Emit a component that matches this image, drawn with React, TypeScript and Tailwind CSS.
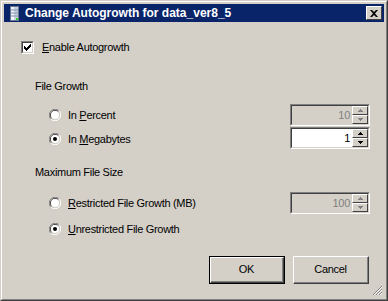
import React from "react";

const font = { fontFamily: '"Liberation Sans", Arial, sans-serif' };

function Radio({ checked }: { checked?: boolean }) {
  return (
    <svg width="12" height="12" viewBox="0 0 12 12" className="shrink-0">
      <path d="M10.5 2 A5.5 5.5 0 0 0 2 10.5" fill="none" stroke="#808080" strokeWidth="1" />
      <path d="M9.5 2.8 A4.5 4.5 0 0 0 2.8 9.5" fill="none" stroke="#404040" strokeWidth="1" />
      <path d="M1.5 10 A5.5 5.5 0 0 0 10 1.5" fill="none" stroke="#ffffff" strokeWidth="1" />
      <path d="M2.5 9.2 A4.5 4.5 0 0 0 9.2 2.5" fill="none" stroke="#d4d0c8" strokeWidth="1" />
      <circle cx="6" cy="6" r="4" fill="#ffffff" />
      {checked && <circle cx="6" cy="6" r="2" fill="#000" />}
    </svg>
  );
}

function Checkbox() {
  return (
    <div className="w-[13px] h-[13px] border-t border-l border-t-[#808080] border-l-[#808080] border-r border-b border-r-white border-b-white shrink-0">
      <div className="w-full h-full border-t border-l border-t-[#404040] border-l-[#404040] border-r border-b border-r-[#d4d0c8] border-b-[#d4d0c8] bg-white flex items-center justify-center">
        <svg width="7" height="7" viewBox="0 0 7 7">
          <path d="M0 2h1v1h1v1h1v-1h1v-1h1v-1h1v-1h1v3h-1v1h-1v1h-1v1h-1v1h-1v-1h-1v-1h-1v-1h-1z" fill="#000" />
        </svg>
      </div>
    </div>
  );
}

function SpinBtn({ up, disabled }: { up?: boolean; disabled?: boolean }) {
  const c = disabled ? "#808080" : "#000";
  return (
    <div className="flex-1 bg-[#d4d0c8] border-t border-l border-t-white border-l-white border-r border-b border-r-[#404040] border-b-[#404040] flex items-center justify-center">
      <svg width="5" height="3" viewBox="0 0 5 3">
        {up ? (
          <path d="M2 0h1v1h1v1h1v1h-5v-1h1v-1h1z" fill={c} />
        ) : (
          <path d="M0 0h5v1h-1v1h-1v1h-1v-1h-1v-1h-1z" fill={c} />
        )}
      </svg>
    </div>
  );
}

function Spinner({ value, disabled }: { value: string; disabled?: boolean }) {
  return (
    <div className="w-[80px] h-[22px] border-t border-l border-t-[#808080] border-l-[#808080] border-r border-b border-r-white border-b-white shrink-0">
      <div
        className={`w-full h-full border-t border-l border-t-[#404040] border-l-[#404040] border-r border-b border-r-[#d4d0c8] border-b-[#d4d0c8] flex ${
          disabled ? "bg-[#d4d0c8]" : "bg-white"
        }`}
      >
        <div
          className={`flex-1 flex items-center justify-end pr-[2px] text-[11px] ${
            disabled ? "text-[#808080]" : "text-black"
          }`}
        >
          {value}
        </div>
        <div className="w-[16px] flex flex-col">
          <SpinBtn up disabled={disabled} />
          <SpinBtn disabled={disabled} />
        </div>
      </div>
    </div>
  );
}

function Button({ children, def }: { children: React.ReactNode; def?: boolean }) {
  return (
    <div className={`w-[76px] h-[28px] ${def ? "border border-black" : ""}`}>
      <div className="w-full h-full border-t border-l border-t-white border-l-white border-r border-b border-r-[#404040] border-b-[#404040]">
        <div className="w-full h-full border-r border-b border-r-[#808080] border-b-[#808080] flex items-center justify-center text-[11px] text-black">
          {children}
        </div>
      </div>
    </div>
  );
}

function RadioRow({ checked, children }: { checked?: boolean; children: React.ReactNode }) {
  return (
    <div className="flex items-center gap-[7px]">
      <Radio checked={checked} />
      <span>{children}</span>
    </div>
  );
}

export default function App() {
  return (
    <div className="w-[388px] h-[301px] bg-[#d4d0c8] overflow-hidden" style={font}>
      <div className="w-full h-full border-t border-l border-t-[#d4d0c8] border-l-[#d4d0c8] border-r border-b border-r-[#404040] border-b-[#404040]">
        <div className="w-full h-full border-t border-l border-t-white border-l-white border-r border-b border-r-[#808080] border-b-[#808080] p-[2px] flex flex-col">
          {/* title bar */}
          <div className="h-[18px] bg-[#0a246a] flex items-center pl-[6px] pr-[2px] shrink-0">
            <svg width="9" height="15" viewBox="0 0 9 15" className="shrink-0">
              <rect x="0.5" y="0.5" width="8" height="14" fill="#c8d0e0" stroke="#6a7890" />
              <rect x="1" y="1" width="3" height="13" fill="#f0f4ff" />
              <path d="M1 4h7M1 7h7M1 10h7" stroke="#8090a8" />
              <rect x="6" y="12" width="2" height="2" fill="#30d030" />
            </svg>
            <div className="ml-[6px] text-white font-bold text-[12px] leading-none flex-1">
              Change Autogrowth for data_ver8_5
            </div>
            <div className="w-[16px] h-[14px] bg-[#d4d0c8] border-t border-l border-t-white border-l-white border-r border-b border-r-[#404040] border-b-[#404040] flex items-center justify-center">
              <svg width="8" height="7" viewBox="0 0 8 7">
                <path d="M0 0h2l2 2 2-2h2l-3 3.5 3 3.5h-2l-2-2-2 2h-2l3-3.5z" fill="#000" />
              </svg>
            </div>
          </div>

          {/* body */}
          <div className="flex-1 relative text-[11px] leading-[13px] tracking-[-0.3px] text-black">
            <div className="flex items-center gap-[8px] ml-[17px] mt-[19px] h-[13px]">
              <Checkbox />
              <span>
                <u>E</u>nable Autogrowth
              </span>
            </div>

            <div className="ml-[31px] mt-[26px] h-[13px]">File Growth</div>

            <div className="ml-[45px] mr-[14px] mt-[11px] h-[22px] flex items-center justify-between">
              <RadioRow>
                In <u>P</u>ercent
              </RadioRow>
              <Spinner value="10" disabled />
            </div>
            <div className="ml-[45px] mr-[14px] mt-[1px] h-[22px] flex items-center justify-between">
              <div className="mt-[2px]">
                <RadioRow checked>
                  In <u>M</u>egabytes
                </RadioRow>
              </div>
              <Spinner value="1" />
            </div>

            <div className="ml-[31px] mt-[17px] h-[13px]">Maximum File Size</div>

            <div className="ml-[45px] mr-[14px] mt-[13px] h-[22px] flex items-center justify-between">
              <RadioRow>
                <u>R</u>estricted File Growth (MB)
              </RadioRow>
              <Spinner value="100" disabled />
            </div>
            <div className="ml-[45px] mr-[14px] mt-[4px] h-[22px] flex items-center">
              <RadioRow checked>
                <u>U</u>nrestricted File Growth
              </RadioRow>
            </div>

            <div className="absolute right-[15px] bottom-[13px] flex gap-[8px]">
              <Button def>OK</Button>
              <Button>Cancel</Button>
            </div>
            <svg width="11" height="11" viewBox="0 0 11 11" className="absolute right-[1px] bottom-[1px]">
              <path d="M10 1L1 10M10 4L4 10M10 7L7 10" stroke="#808080" strokeWidth="1" />
              <path d="M10 2L2 10M10 5L5 10M10 8L8 10" stroke="#ffffff" strokeWidth="1" />
            </svg>
          </div>
        </div>
      </div>
    </div>
  );
}
